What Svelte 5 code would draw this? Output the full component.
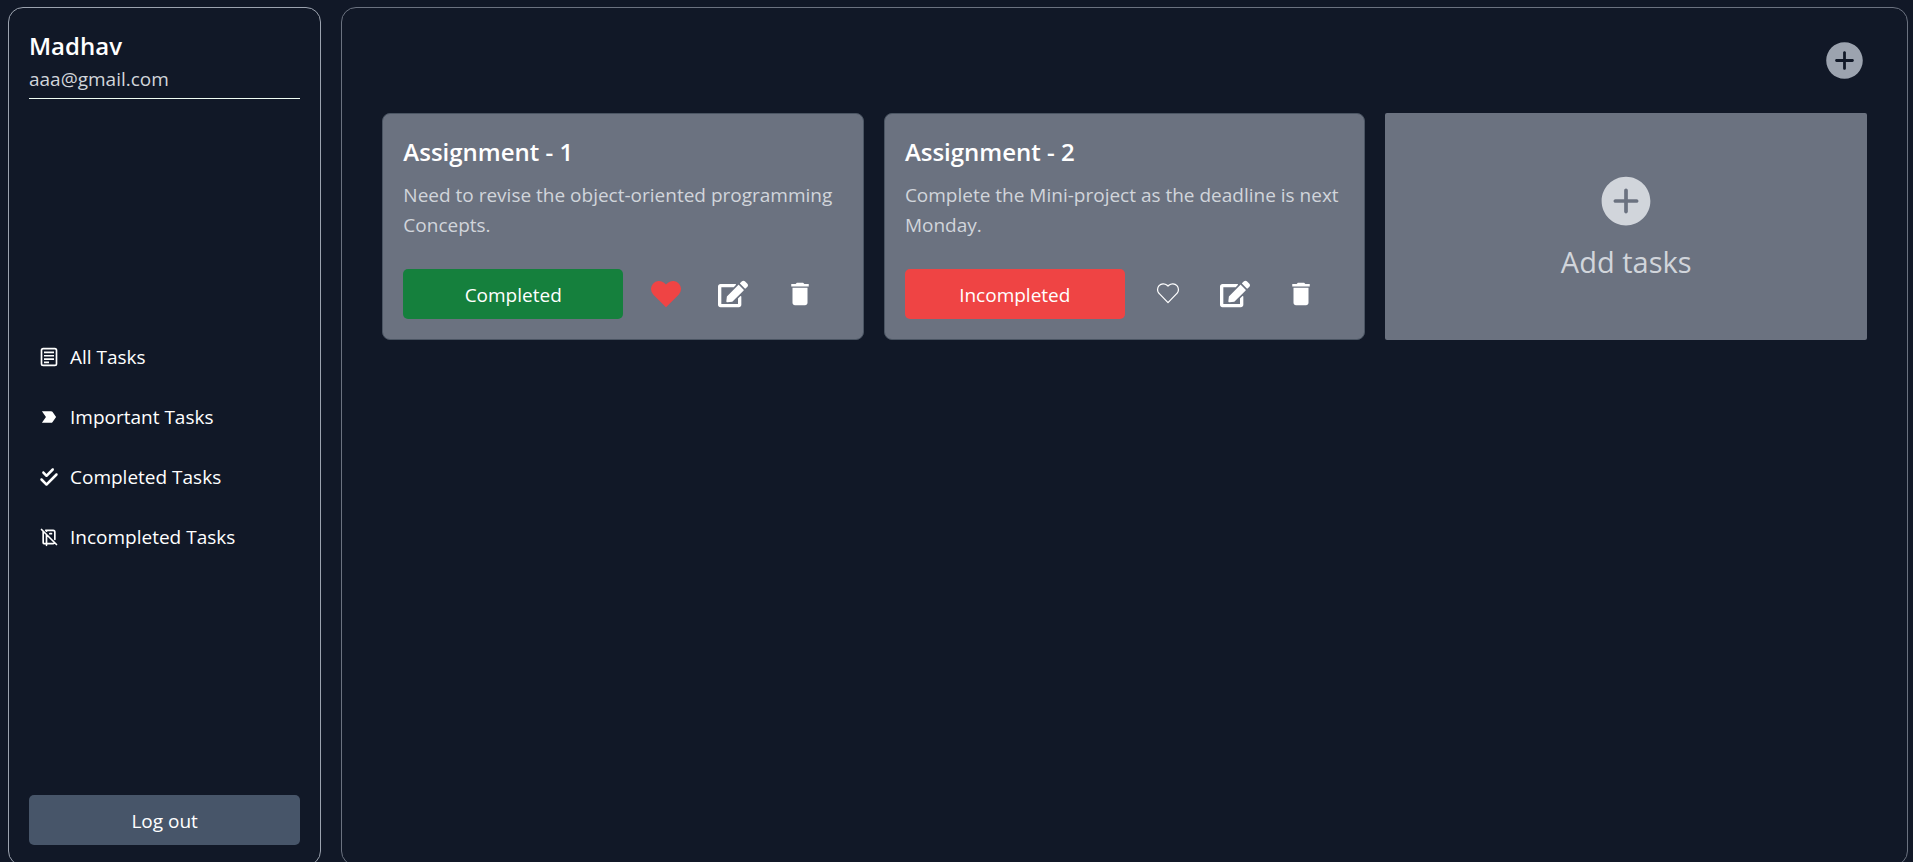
<script>
  const nav = [
    { icon: 'notes', label: 'All Tasks' },
    { icon: 'important', label: 'Important Tasks' },
    { icon: 'checks', label: 'Completed Tasks' },
    { icon: 'off', label: 'Incompleted Tasks' }
  ];

  let tasks = $state([
    {
      title: 'Assignment - 1',
      desc: 'Need to revise the object-oriented programming Concepts.',
      done: true,
      liked: true
    },
    {
      title: 'Assignment - 2',
      desc: 'Complete the Mini-project as the deadline is next Monday.',
      done: false,
      liked: false
    }
  ]);
</script>

{#snippet addCircle()}
  <svg viewBox="0 0 512 512" fill="currentColor" aria-hidden="true">
    <path d="M256 48C141.1 48 48 141.1 48 256s93.1 208 208 208 208-93.1 208-208S370.9 48 256 48zm90.6 223.8h-74.8v74.8c0 8.7-7.1 15.8-15.8 15.8s-15.8-7.1-15.8-15.8v-74.8h-74.8c-8.7 0-15.8-7.1-15.8-15.8s7.1-15.8 15.8-15.8h74.8v-74.8c0-8.7 7.1-15.8 15.8-15.8s15.8 7.1 15.8 15.8v74.8h74.8c8.7 0 15.8 7.1 15.8 15.8s-7.1 15.8-15.8 15.8z" />
  </svg>
{/snippet}

<div class="page">
  <aside class="panel sidebar">
    <header>
      <h2>Madhav</h2>
      <p class="email">aaa@gmail.com</p>
    </header>

    <nav>
      {#each nav as item}
        <a href="#{item.icon}">
          {#if item.icon === 'notes'}
            <svg viewBox="0 0 24 24" fill="none" stroke="currentColor" stroke-width="2" aria-hidden="true">
              <rect x="3" y="2" width="18" height="20" rx="2" />
              <path d="M6 6.5h12M6 10.5h12M6 14.5h12M6 18.5h6" />
            </svg>
          {:else if item.icon === 'important'}
            <svg viewBox="0 0 24 24" fill="currentColor" aria-hidden="true">
              <path d="M3.5 18.99l11 .01c.67 0 1.27-.33 1.63-.84L20.5 12l-4.37-6.16c-.36-.51-.96-.84-1.63-.84l-11 .01L8.34 12 3.5 18.99z" />
            </svg>
          {:else if item.icon === 'checks'}
            <svg viewBox="0 0 448 512" fill="currentColor" aria-hidden="true">
              <path d="M342.6 86.6c12.5-12.5 12.5-32.8 0-45.3s-32.8-12.5-45.3 0L160 178.7l-57.4-57.4c-12.5-12.5-32.8-12.5-45.3 0s-12.5 32.8 0 45.3l80 80c12.5 12.5 32.8 12.5 45.3 0l160-160zm96 128c12.5-12.5 12.5-32.8 0-45.3s-32.8-12.5-45.3 0L160 402.7 54.6 297.4c-12.5-12.5-32.8-12.5-45.3 0s-12.5 32.8 0 45.3l128 128c12.5 12.5 32.8 12.5 45.3 0l256-256z" />
            </svg>
          {:else}
            <svg viewBox="0 0 24 24" fill="none" stroke="currentColor" stroke-width="2" stroke-linecap="round" stroke-linejoin="round" aria-hidden="true">
              <path d="M8 4h9a2 2 0 0 1 2 2v9m-.179 3.828a2 2 0 0 1-1.821 1.172h-11a1 1 0 0 1-1-1v-14m4-1v1m0 4v13M13 8h2M3 3l18 18" />
            </svg>
          {/if}
          {item.label}
        </a>
      {/each}
    </nav>

    <button class="logout">Log out</button>
  </aside>

  <main class="panel content">
    <div class="toolbar">
      <button class="icon add" aria-label="Add task">{@render addCircle()}</button>
    </div>

    <div class="grid">
      {#each tasks as task}
        <article class="card">
          <h3>{task.title}</h3>
          <p>{task.desc}</p>
          <div class="actions">
            <button class="status" class:done={task.done} onclick={() => (task.done = !task.done)}>
              {task.done ? 'Completed' : 'Incompleted'}
            </button>
            <div class="tools">
              <button class="icon" class:liked={task.liked} aria-label="Favourite" onclick={() => (task.liked = !task.liked)}>
                {#if task.liked}
                  <svg viewBox="0 0 30 30" fill="currentColor" aria-hidden="true">
                    <path d="M15 28.3L2.34 15.66A8 8 0 0 1 13 3.76L15 5.5l2-1.74a8 8 0 0 1 10.66 11.9z" />
                  </svg>
                {:else}
                  <svg viewBox="0 0 24 24" fill="none" stroke="currentColor" stroke-linejoin="round" aria-hidden="true">
                    <path d="M12 18.9L5.05 11.75A4.6 4.6 0 0 1 11.3 5L12 5.7l.7-.7a4.6 4.6 0 0 1 6.25 6.75z" />
                  </svg>
                {/if}
              </button>
              <button class="icon" aria-label="Edit">
                <svg viewBox="0 0 576 512" fill="currentColor" aria-hidden="true">
                  <path d="M402.6 83.2l90.2 90.2c3.8 3.8 3.8 10 0 13.8L274.4 405.6l-92.8 10.3c-12.4 1.4-22.9-9.1-21.5-21.5l10.3-92.8L388.8 83.2c3.8-3.8 10-3.8 13.8 0zm162-22.9l-48.8-48.8c-15.2-15.2-39.9-15.2-55.2 0l-35.4 35.4c-3.8 3.8-3.8 10 0 13.8l90.2 90.2c3.8 3.8 10 3.8 13.8 0l35.4-35.4c15.2-15.3 15.2-40 0-55.2zM384 346.2V448H64V128h229.8c3.2 0 6.2-1.3 8.5-3.5l40-40c7.6-7.6 2.2-20.5-8.5-20.5H48C21.5 64 0 85.5 0 112v352c0 26.5 21.5 48 48 48h352c26.5 0 48-21.5 48-48V306.2c0-10.7-12.9-16-20.5-8.5l-40 40c-2.2 2.3-3.5 5.3-3.5 8.5z" />
                </svg>
              </button>
              <button class="icon" aria-label="Delete">
                <svg viewBox="0 0 24 24" fill="currentColor" aria-hidden="true">
                  <path d="M6 19c0 1.1.9 2 2 2h8c1.1 0 2-.9 2-2V7H6v12zM19 4h-3.5l-1-1h-5l-1 1H5v2h14V4z" />
                </svg>
              </button>
            </div>
          </div>
        </article>
      {/each}

      <button class="add-card">
        {@render addCircle()}
        <span>Add tasks</span>
      </button>
    </div>
  </main>
</div>

<style>
  :global(body) {
    margin: 0;
    background: #111827;
  }

  .page,
  .page * {
    box-sizing: border-box;
    margin: 0;
  }

  .page {
    display: grid;
    grid-template-columns: 1fr 5fr;
    gap: 20px;
    height: 100vh;
    padding: 7px 5px 0 8px;
    overflow: hidden;
    color: #fff;
    background: #111827;
    font: 19px/30px 'Open Sans', 'Noto Sans', sans-serif;
  }

  svg {
    display: block;
    flex: none;
  }

  button {
    padding: 0;
    border: 0;
    color: inherit;
    background: none;
    font: inherit;
    cursor: pointer;
  }

  .panel {
    height: calc(100vh - 3px);
    border: 1px solid #6b7280;
    border-radius: 15px;
  }

  .sidebar {
    display: flex;
    flex-direction: column;
    justify-content: space-between;
    padding: 20px;
    border-color: #9ca3af;
  }

  .sidebar header {
    padding-bottom: 4px;
    border-bottom: 1px solid #f0fdf4;
  }

  h2,
  h3 {
    font-size: 24px;
    font-weight: 600;
    line-height: 36px;
  }

  .email {
    color: #d1d5db;
  }

  nav a {
    display: flex;
    align-items: center;
    gap: 11px;
    height: 60px;
    padding-left: 10px;
    color: inherit;
    text-decoration: none;
  }

  nav svg {
    width: 20px;
    height: 20px;
  }

  .logout {
    height: 50px;
    padding-top: 1px;
    border-radius: 5px;
    background: #475569;
  }

  .content {
    padding: 30px 40px;
  }

  .toolbar {
    display: flex;
    justify-content: flex-end;
  }

  .add svg {
    width: 45px;
    height: 45px;
    color: #9ca3af;
  }

  .grid {
    display: grid;
    grid-template-columns: repeat(3, 1fr);
    gap: 20px;
    padding-top: 30px;
  }

  .card {
    padding: 20px;
    border: 1px solid #4b5563;
    border-radius: 8px;
    background: #6b7280;
  }

  .card p {
    margin: 10px 0 29px;
    color: #d1d5db;
  }

  .actions {
    display: grid;
    grid-template-columns: 1fr 1fr;
  }

  .status {
    height: 50px;
    padding-top: 1px;
    border-radius: 5px;
    background: #ef4444;
  }

  .status.done {
    background: #15803d;
  }

  .tools {
    display: flex;
    align-items: center;
    justify-content: space-around;
    padding: 0 10px;
  }

  .tools svg {
    width: 30px;
    height: 30px;
  }

  .liked {
    color: #ef4444;
  }

  .add-card {
    display: flex;
    flex-direction: column;
    align-items: center;
    justify-content: center;
    gap: 11px;
    border-radius: 2px;
    color: #d1d5db;
    background: #6b7280;
    font-size: 29px;
    line-height: 40px;
  }

  .add-card svg {
    width: 60px;
    height: 60px;
  }
</style>
